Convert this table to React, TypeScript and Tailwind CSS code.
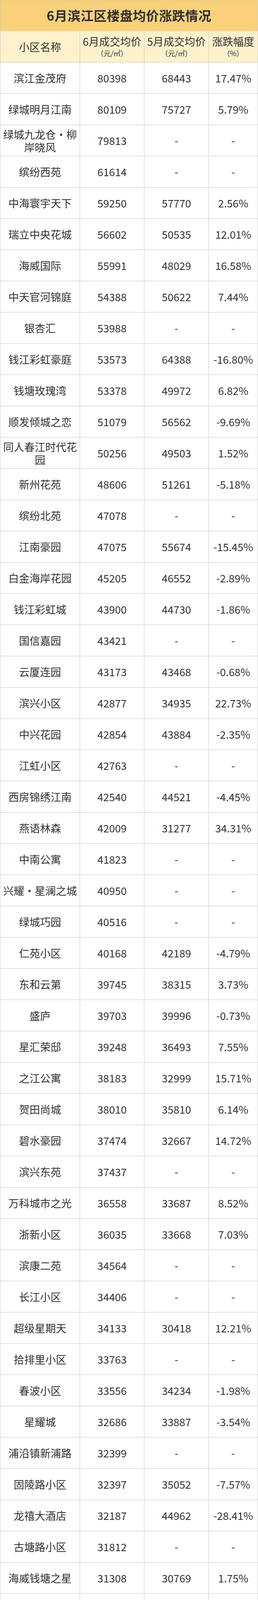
type Row = {
  name: string;
  june: string;
  may: string;
  change: string;
};

const rows: Row[] = [
  { name: "滨江金茂府", june: "80398", may: "68443", change: "17.47%" },
  { name: "绿城明月江南", june: "80109", may: "75727", change: "5.79%" },
  { name: "绿城九龙仓·柳岸晓风", june: "79813", may: "-", change: "-" },
  { name: "缤纷西苑", june: "61614", may: "-", change: "-" },
  { name: "中海寰宇天下", june: "59250", may: "57770", change: "2.56%" },
  { name: "瑞立中央花城", june: "56602", may: "50535", change: "12.01%" },
  { name: "海威国际", june: "55991", may: "48029", change: "16.58%" },
  { name: "中天官河锦庭", june: "54388", may: "50622", change: "7.44%" },
  { name: "银杏汇", june: "53988", may: "-", change: "-" },
  { name: "钱江彩虹豪庭", june: "53573", may: "64388", change: "-16.80%" },
  { name: "钱塘玫瑰湾", june: "53378", may: "49972", change: "6.82%" },
  { name: "顺发倾城之恋", june: "51079", may: "56562", change: "-9.69%" },
  { name: "同人春江时代花园", june: "50256", may: "49503", change: "1.52%" },
  { name: "新州花苑", june: "48606", may: "51261", change: "-5.18%" },
  { name: "缤纷北苑", june: "47078", may: "-", change: "-" },
  { name: "江南豪园", june: "47075", may: "55674", change: "-15.45%" },
  { name: "白金海岸花园", june: "45205", may: "46552", change: "-2.89%" },
  { name: "钱江彩虹城", june: "43900", may: "44730", change: "-1.86%" },
  { name: "国信嘉园", june: "43421", may: "-", change: "-" },
  { name: "云厦连园", june: "43173", may: "43468", change: "-0.68%" },
  { name: "滨兴小区", june: "42877", may: "34935", change: "22.73%" },
  { name: "中兴花园", june: "42854", may: "43884", change: "-2.35%" },
  { name: "江虹小区", june: "42763", may: "-", change: "-" },
  { name: "西房锦绣江南", june: "42540", may: "44521", change: "-4.45%" },
  { name: "燕语林森", june: "42009", may: "31277", change: "34.31%" },
  { name: "中南公寓", june: "41823", may: "-", change: "-" },
  { name: "兴耀·星澜之城", june: "40950", may: "-", change: "-" },
  { name: "绿城巧园", june: "40516", may: "-", change: "-" },
  { name: "仁苑小区", june: "40168", may: "42189", change: "-4.79%" },
  { name: "东和云第", june: "39745", may: "38315", change: "3.73%" },
  { name: "盛庐", june: "39703", may: "39996", change: "-0.73%" },
  { name: "星汇荣邸", june: "39248", may: "36493", change: "7.55%" },
  { name: "之江公寓", june: "38183", may: "32999", change: "15.71%" },
  { name: "贺田尚城", june: "38010", may: "35810", change: "6.14%" },
  { name: "碧水豪园", june: "37474", may: "32667", change: "14.72%" },
  { name: "滨兴东苑", june: "37437", may: "-", change: "-" },
  { name: "万科城市之光", june: "36558", may: "33687", change: "8.52%" },
  { name: "浙新小区", june: "36035", may: "33668", change: "7.03%" },
  { name: "滨康二苑", june: "34564", may: "-", change: "-" },
  { name: "长江小区", june: "34406", may: "-", change: "-" },
  { name: "超级星期天", june: "34133", may: "30418", change: "12.21%" },
  { name: "拾排里小区", june: "33763", may: "-", change: "-" },
  { name: "春波小区", june: "33556", may: "34234", change: "-1.98%" },
  { name: "星耀城", june: "32686", may: "33887", change: "-3.54%" },
  { name: "浦沿镇新浦路", june: "32399", may: "-", change: "-" },
  { name: "固陵路小区", june: "32397", may: "35052", change: "-7.57%" },
  { name: "龙禧大酒店", june: "32187", may: "44962", change: "-28.41%" },
  { name: "古塘路小区", june: "31812", may: "-", change: "-" },
  { name: "海威钱塘之星", june: "31308", may: "30769", change: "1.75%" },
  { name: "冠山小区", june: "31226", may: "32948", change: "-5.23%" },
  { name: "长江西苑", june: "31191", may: "-", change: "-" },
  { name: "滨文苑", june: "30660", may: "29766", change: "3.00%" },
  { name: "长兴苑", june: "30491", may: "28450", change: "7.17%" },
  { name: "江滨澜廷", june: "30477", may: "24744", change: "23.17%" },
  { name: "东和时代", june: "30227", may: "39066", change: "-22.63%" },
  { name: "白马湖小区孔雀苑", june: "29898", may: "33849", change: "-11.67%" },
  { name: "铁岭花园", june: "29869", may: "29358", change: "1.74%" },
  { name: "中兴和园", june: "29860", may: "26990", change: "10.63%" },
  { name: "时代长岛之春", june: "29742", may: "32481", change: "-8.43%" },
  { name: "白马湖壹号", june: "28917", may: "29011", change: "-0.32%" },
  { name: "兴耀鑫都汇", june: "28592", may: "27396", change: "4.37%" },
  { name: "长虹苑", june: "27336", may: "-", change: "-" },
  { name: "西兴镇人民路", june: "26658", may: "-", change: "-" },
  { name: "世茂之西湖茂御居", june: "25349", may: "21780", change: "16.39%" },
  { name: "恒鼎博邑郡", june: "20216", may: "25350", change: "-20.25%" },
];

// 左边框占 1px，列宽合计 = 659
const cols = "grid grid-cols-[204px_165px_165px_1fr]";
const cell =
  "h-[80px] flex items-center justify-center text-center border-r border-b border-[#c8c8c8]";

function HeaderCell({ top, bottom, last }: { top: string; bottom?: string; last?: boolean }) {
  return (
    <div className={`${cell} ${last ? "border-r-0" : ""} flex-col`}>
      <span className="text-[27px] leading-[32px]">{top}</span>
      {bottom && <span className="text-[18px] leading-[28px]">{bottom}</span>}
    </div>
  );
}

export default function App() {
  return (
    <div className="w-[661px] overflow-hidden bg-white text-[#333] border-x border-[#c8c8c8] font-['Noto_Sans_CJK_SC','Noto_Sans',sans-serif]">
      {/* 标题 */}
      <div className="h-[80px] flex items-center justify-center bg-[#f9d17b] border-t border-b border-t-[#e2c98f] border-b-[#f3e3b8]">
        <h1 className="text-[33px] font-bold text-[#2f2f2f] tracking-[0.5px]">6月滨江区楼盘均价涨跌情况</h1>
      </div>

      {/* 表头 */}
      <div className={`${cols} bg-[#fdf1cc]`}>
        <HeaderCell top="小区名称" />
        <HeaderCell top="6月成交均价" bottom="（元/㎡）" />
        <HeaderCell top="5月成交均价" bottom="（元/㎡）" />
        <HeaderCell top="涨跌幅度" bottom="（%）" last />
      </div>

      {rows.map((r) => (
        <div key={r.name} className={`${cols} text-[27px] leading-[33px]`}>
          <div className={`${cell} px-[6px]`}>{r.name}</div>
          <div className={cell}>{r.june}</div>
          <div className={cell}>{r.may}</div>
          <div className={`${cell} border-r-0`}>{r.change}</div>
        </div>
      ))}
    </div>
  );
}
